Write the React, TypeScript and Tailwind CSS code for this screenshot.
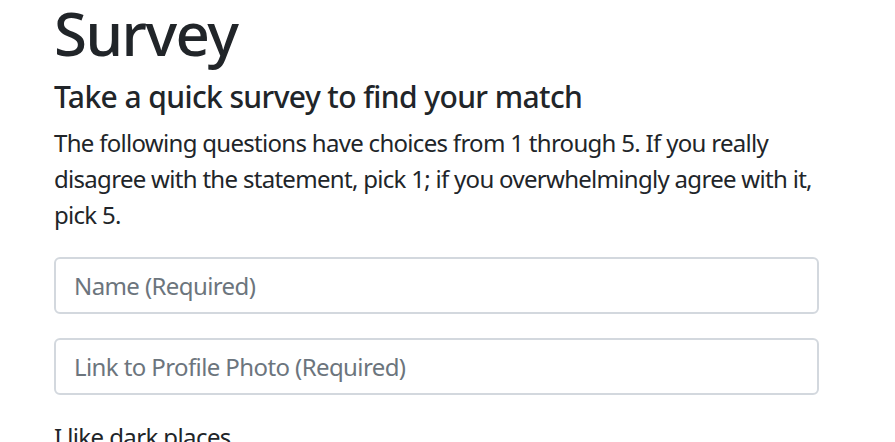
export default function App() {
    return (
        <div className="min-h-screen bg-white text-[#212529] font-['Noto_Sans',sans-serif] overflow-hidden h-[442px]">
            <div className="ml-[54px] w-[765px]">
                <h1 className="text-[60px] font-medium leading-[72px] tracking-[-1.5px] -mt-[3px] mb-[10px]">Survey</h1>
                <h5 className="text-[30px] font-medium leading-[36px] tracking-[-0.6px] mb-[10px]">Take a quick survey to find your match</h5>
                {/* line breaks kept where the original font wraps */}
                <p className="w-[800px] text-[24px] leading-[36px] tracking-[-0.7px] mb-[24px]">
                    The following questions have choices from 1 through 5. If you really
                    <br />
                    disagree with the statement, pick 1; if you overwhelmingly agree with it,
                    <br />
                    pick 5.
                </p>

                <form className="space-y-[24px]">
                    <div>
                        <input
                            type="text"
                            placeholder="Name (Required)"
                            className="block w-full h-[57px] px-[18px] border-2 border-[#d3d8de] rounded-[6px] text-[24px] tracking-[-0.6px] placeholder:text-[#6c757d] outline-none"
                        />
                    </div>
                    <div>
                        <input
                            type="text"
                            placeholder="Link to Profile Photo (Required)"
                            className="block w-full h-[57px] px-[18px] border-2 border-[#d3d8de] rounded-[6px] text-[24px] tracking-[-0.6px] placeholder:text-[#6c757d] outline-none"
                        />
                    </div>
                    <div>
                        <label className="block text-[24px] leading-[36px] tracking-[-0.6px]">I like dark places</label>
                    </div>
                </form>
            </div>
        </div>
    );
}
